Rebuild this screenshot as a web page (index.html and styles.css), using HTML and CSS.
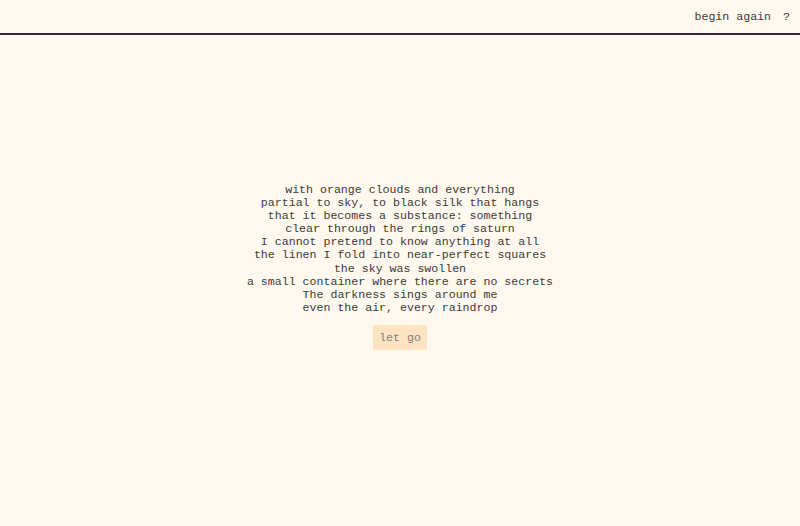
FILE: index.html
```html
<!DOCTYPE html>
<html>
<head>
<meta charset="utf-8">
<link rel="stylesheet" href="styles.css">
</head>
<body>
<header class="topbar">
  <span class="link">begin again</span>
  <span class="link">?</span>
</header>
<main class="stage">
  <div class="poem">
    <div>with orange clouds and everything</div>
    <div>partial to sky, to black silk that hangs</div>
    <div>that it becomes a substance: something</div>
    <div>clear through the rings of saturn</div>
    <div>I cannot pretend to know anything at all</div>
    <div>the linen I fold into near-perfect squares</div>
    <div>the sky was swollen</div>
    <div>a small container where there are no secrets</div>
    <div>The darkness sings around me</div>
    <div>even the air, every raindrop</div>
  </div>
  <button class="letgo">let go</button>
</main>
</body>
</html>
```
FILE: styles.css
```css
html, body {
  margin: 0;
  padding: 0;
}
body {
  background: #fef8ee;
  color: #3a3a3a;
  font-family: "Liberation Mono", "Courier New", monospace;
  font-size: 11.6px;
  height: 526px;
  overflow: hidden;
}
.topbar {
  height: 33px;
  border-bottom: 2px solid #2a2a2a;
  display: flex;
  justify-content: flex-end;
  align-items: center;
  gap: 12px;
  padding-right: 10px;
  box-sizing: content-box;
}
.link {
  color: #3a3a3a;
}
.stage {
  display: flex;
  flex-direction: column;
  align-items: center;
  padding-top: 148px;
}
.poem {
  text-align: center;
  line-height: 13.1px;
}
.letgo {
  margin-top: 11px;
  background: #fee4c2;
  border: none;
  color: #808080;
  font-family: "Liberation Mono", "Courier New", monospace;
  font-size: 11.6px;
  padding: 0;
  white-space: nowrap;
  height: 25px;
  width: 54px;
}
```
